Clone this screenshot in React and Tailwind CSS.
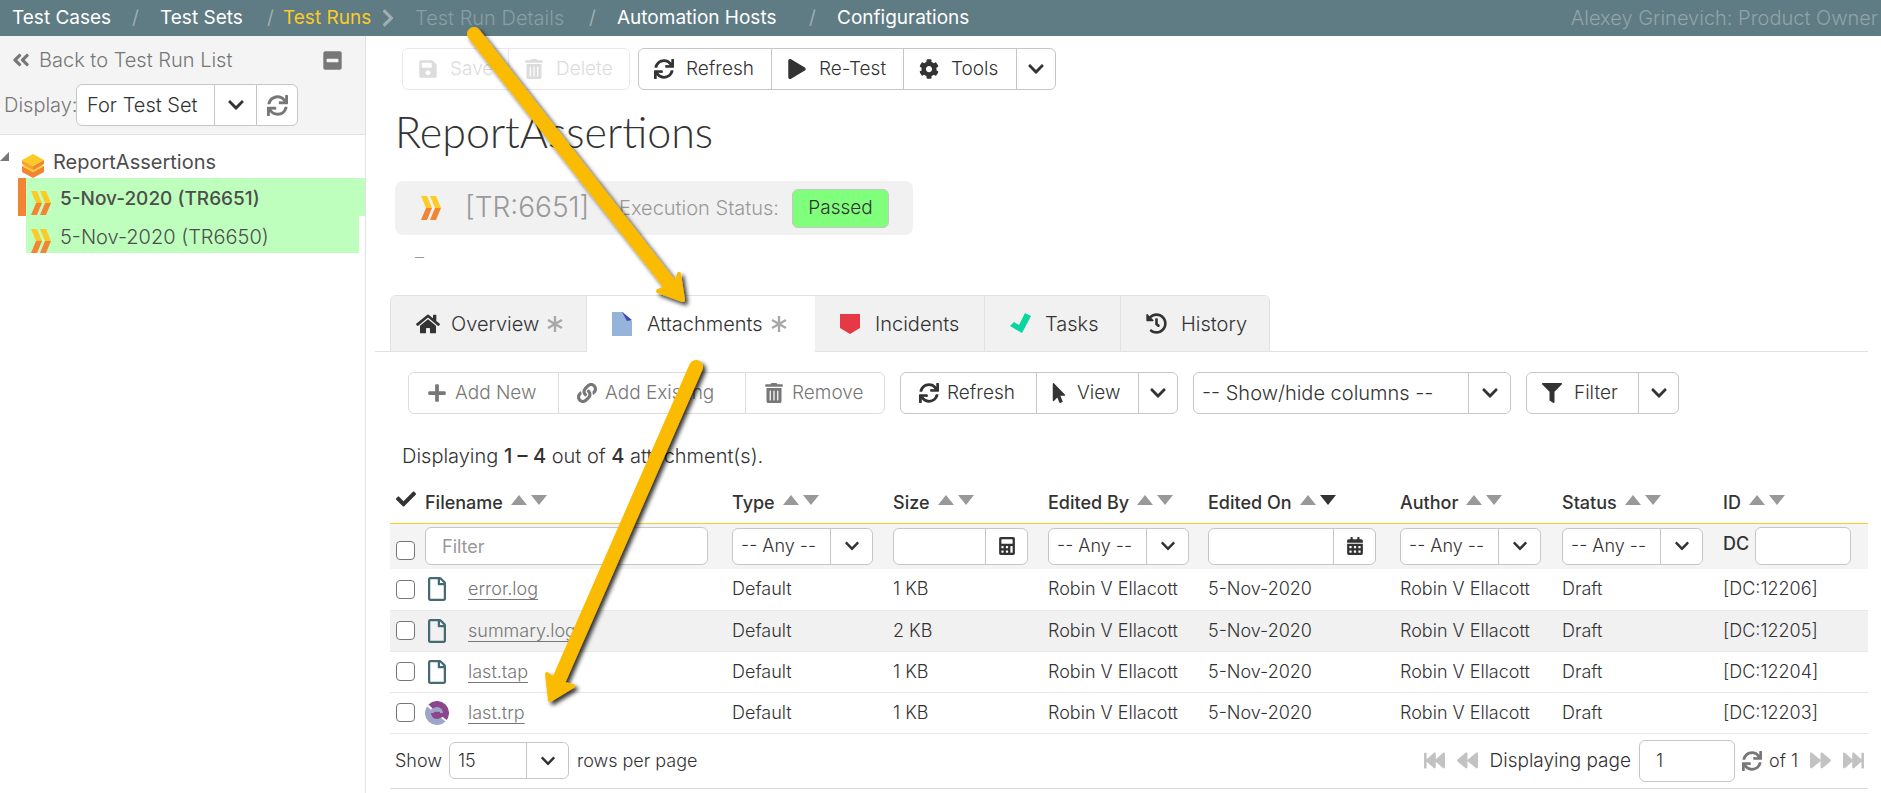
import React from "react";
import {
  FaAngleDoubleLeft, FaMinusSquare, FaSync, FaChevronDown, FaSave, FaTrashAlt, FaPlay, FaCog, FaHome,
  FaHistory, FaPlus, FaLink, FaMousePointer, FaFilter, FaCheck, FaCalculator, FaCalendarAlt,
  FaFastBackward, FaBackward, FaForward, FaFastForward, FaRegFile, FaChevronRight,
} from "react-icons/fa";

const fontBody = "font-['Inter','Open_Sans',sans-serif]";

function RunIcon({ className }) {
  return (
    <svg viewBox="0 0 20 24" className={className} aria-hidden="true">
      <path d="M0 0h6l5 12H5zM9 0h6l5 12h-6z" fill="#fdcb26" />
      <path d="M5 12h6L6 24H0zM14 12h6l-5 12H9z" fill="#f18533" />
    </svg>
  );
}

function SetIcon() {
  return (
    <svg viewBox="0 0 22 24" className="h-6 w-[22px]" aria-hidden="true">
      <path d="M0 12l11 6 11-6v6l-11 6-11-6z" fill="#f18533" />
      <path d="M0 12l3-1 8 4 8-4 3 1-11 6z" fill="#fdcb26" />
      <path d="M0 6l11 6v4L0 10z" fill="#f9a030" />
      <path d="M22 6l-11 6v4l11-6z" fill="#f18533" />
      <path d="M11 0l11 6-11 6L0 6z" fill="#fdcb26" />
    </svg>
  );
}

function Asterisk() {
  return (
    <svg viewBox="0 0 16 16" className="h-4 w-4" aria-hidden="true" stroke="#a8a8a8" strokeWidth="2.4">
      <path d="M8 0v16M1 4l14 8M15 4L1 12" />
    </svg>
  );
}

function RapiseIcon() {
  return (
    <svg viewBox="0 0 24 24" className="h-6 w-6" aria-hidden="true">
      <path d="M3.500 3.500A12 12 0 0 1 20.500 20.500z" fill="#8b468c" />
      <path d="M3.500 3.500A12 12 0 0 0 20.500 20.500z" fill="#9ea5c8" />
      <path d="M6 12a6 6 0 0 1 12 0z" fill="#9ea5c8" />
      <path d="M6 12a6 6 0 0 0 12 0z" fill="#8b468c" />
      <path d="M1.500 3.500L6.500 8M17 16.500l5 4" stroke="#fff" strokeWidth="1.800" />
      <path d="M9 11.500h6" stroke="#8b468c" strokeWidth="1.500" />
    </svg>
  );
}

const groupTone = {
  dark: "border-[#c6c6c6] divide-[#c6c6c6] text-[#333]",
  muted: "border-[#dcdcdc] divide-[#dcdcdc] text-[#777]",
  off: "border-[#e8e8e8] divide-[#e8e8e8] text-[#dcdcdc]",
};

function Group({ tone = "dark", children }) {
  return (
    <div className={`flex h-[42px] divide-x overflow-hidden rounded-md border text-[19px] ${groupTone[tone]}`}>{children}</div>
  );
}

function Btn({ icon: Icon, children, layout, disabled }) {
  return (
    <button type="button" disabled={disabled} className={`flex items-center whitespace-nowrap ${layout}`}>
      <Icon className="size-5 shrink-0" />
      {children}
    </button>
  );
}

function Caret({ width, label }) {
  return (
    <button type="button" aria-label={label} className={`flex items-center justify-center ${width}`}>
      <FaChevronDown className="size-[18px]" />
    </button>
  );
}

function Select({ label, value, className, small }) {
  return (
    <div className={`relative ${className}`}>
      <select
        aria-label={label}
        defaultValue={value}
        className={`size-full appearance-none rounded-md border border-[#c6c6c6] bg-white pl-2 font-light text-[#333] ${small ? "text-lg" : "text-xl"}`}
      >
        <option>{value}</option>
      </select>
      <span className="pointer-events-none absolute inset-y-px right-px flex w-[42px] items-center justify-center rounded-r-md border-l border-[#c6c6c6] bg-white text-[#333]">
        <FaChevronDown className={small ? "size-4" : "size-[18px]"} />
      </span>
    </div>
  );
}

function IconField({ label, icon: Icon, className }) {
  return (
    <div className={`flex h-[37px] overflow-hidden rounded-md border border-[#c6c6c6] bg-white ${className}`}>
      <input aria-label={label} className="min-w-0 flex-1 px-2" />
      <button type="button" aria-label={`${label} picker`} className="flex w-[42px] items-center justify-center border-l border-[#c6c6c6]">
        <Icon className="size-[18px]" />
      </button>
    </div>
  );
}

function Th({ children, desc }) {
  return (
    <th className="pl-[6px] text-left font-medium whitespace-nowrap">
      <span className="flex items-center gap-2">
        {children}
        <button type="button" aria-label={`Sort ${children}`} className="flex gap-1 pb-[6px]">
          <svg viewBox="0 0 36 10" className="h-[10px] w-9" aria-hidden="true">
            <path d="M0 10L8 0l8 10z" fill="#999" />
            <path d="M20 0h16l-8 10z" fill={desc ? "#333" : "#999"} />
          </svg>
        </button>
      </span>
    </th>
  );
}

function Tab({ width, icon, children, active, star }) {
  return (
    <button
      type="button"
      role="tab"
      aria-selected={!!active}
      className={`flex h-14 items-center pl-[25px] text-xl ${active ? "border-b border-white bg-white" : "border-b border-[#e2e2e2] bg-[#f1f1f1]"} ${width}`}
    >
      <span className="flex w-[35px] items-center">{icon}</span>
      <span className="pr-2">{children}</span>
      {star && <Asterisk />}
    </button>
  );
}

const rows = [
  ["error.log", "1 KB", "12206"],
  ["summary.log", "2 KB", "12205"],
  ["last.tap", "1 KB", "12204"],
  ["last.trp", "1 KB", "12203"],
];

const check = "block size-[19px] appearance-none rounded border border-[#767676] bg-white";

export default function App() {
  return (
    <div className={`relative flex min-h-screen flex-col bg-white text-lg leading-6 font-light text-[#333] ${fontBody}`}>
      <header className="flex h-9 items-center bg-[#5f7b83] pl-3 text-[19px] whitespace-nowrap text-white">
        <nav className="flex flex-1 items-center font-normal">
          <a href="#cases" className="w-[120px]">Test Cases</a>
          <span className="w-7 text-[#9eaeb2]">/</span>
          <a href="#sets" className="w-[107px]">Test Sets</a>
          <span className="w-4 text-[#9eaeb2]">/</span>
          <a href="#runs" className="w-[98px] text-[#fdcb26]">Test Runs</a>
          <FaChevronRight className="h-5 w-[14px] text-[#9eaeb2]" />
          <span className="ml-5 w-[174px] text-xl font-light text-[#8b9ea4]">Test Run Details</span>
          <span className="w-7 text-[#9eaeb2]">/</span>
          <a href="#hosts" className="w-[192px]">Automation Hosts</a>
          <span className="w-7 text-[#9eaeb2]">/</span>
          <a href="#config">Configurations</a>
        </nav>
        <span className="pr-[3px] text-xl text-[#93a3a8]">Alexey Grinevich: Product Owner</span>
      </header>

      <div className="flex flex-1">
        <aside className="w-[366px] shrink-0 border-r border-[#e2e2e2] text-xl leading-6">
          <div className="flex flex-col gap-3 border-b border-[#e2e2e2] bg-[#f4f4f4] pt-3 pb-2 text-[#777]">
            <div className="flex items-center pr-[22px] pl-[11px]">
              <a href="#list" className="flex flex-1 items-center gap-2">
                <FaAngleDoubleLeft className="size-5" />
                Back to Test Run List
              </a>
              <button type="button" aria-label="Collapse panel"><FaMinusSquare className="size-[21px]" /></button>
            </div>
            <div className="flex h-[42px] items-center pl-1">
              <label htmlFor="display" className="w-[72px]">Display:</label>
              <div className="relative h-full w-[180px]">
                <select id="display" className="size-full appearance-none rounded-l-md border border-[#c6c6c6] bg-white pl-[10px] font-light text-[#333]">
                  <option>For Test Set</option>
                </select>
                <span className="pointer-events-none absolute inset-y-px right-0 flex w-[42px] items-center justify-center border-l border-[#c6c6c6] bg-white text-[#333]">
                  <FaChevronDown className="size-[18px]" />
                </span>
              </div>
              <button type="button" aria-label="Refresh tree" className="flex h-full w-[42px] items-center justify-center rounded-r-md border border-[#c6c6c6] bg-white">
                <FaSync className="size-[21px]" />
              </button>
            </div>
          </div>
          <div className="pt-[11px] text-[#4d4d4d]">
            <div className="flex h-8 items-center font-normal">
              <svg viewBox="0 0 9 9" className="mb-3 h-[9px] w-[9px]" aria-hidden="true"><path d="M9 0v9H0z" fill="#777" /></svg>
              <span className="mt-2 ml-[13px]"><SetIcon /></span>
              <a href="#set" className="ml-[9px]">ReportAssertions</a>
            </div>
            <a href="#6651" className="ml-[18px] flex h-[38px] items-center border-l-8 border-[#f18533] bg-[#bfffbd] pt-1 pl-[5px] text-[19px] font-medium">
              <RunIcon className="mt-2 mr-[9px] h-6 w-5" />
              5-Nov-2020 (TR6651)
            </a>
            <a href="#6650" className="mr-[6px] ml-[26px] flex h-[37px] items-center bg-[#bfffbd] pt-1 pl-[5px]">
              <RunIcon className="mt-2 mr-[9px] h-6 w-5" />
              5-Nov-2020 (TR6650)
            </a>
          </div>
        </aside>

        <main className="min-w-0 flex-1 pt-3 pr-[13px] pl-[9px]">
          <div className="flex gap-2 pl-[27px]">
            <Group tone="off">
              <Btn icon={FaSave} layout="w-[106px] gap-3 pl-[15px]" disabled>Save</Btn>
              <Btn icon={FaTrashAlt} layout="w-[120px] gap-3 pl-[15px]" disabled>Delete</Btn>
            </Group>
            <Group>
              <Btn icon={FaSync} layout="w-[133px] gap-3 pl-[15px]">Refresh</Btn>
              <Btn icon={FaPlay} layout="w-[132px] gap-3 pl-[15px]">Re-Test</Btn>
              <Btn icon={FaCog} layout="w-[113px] gap-3 pl-[15px]">Tools</Btn>
              <Caret width="w-[38px]" label="More tools" />
            </Group>
          </div>

          <h1 className="mt-3 pl-5 font-['Lato',sans-serif] text-[43px] leading-[60px] font-light">ReportAssertions</h1>

          <div className="mt-[19px] ml-5 flex h-[54px] w-[518px] items-center rounded-lg bg-[#f1f1f1] pl-[26px] text-xl text-[#999]">
            <RunIcon className="h-6 w-5" />
            <span className="ml-6 w-[154px] text-[28px]">[TR:6651]</span>
            <span className="flex-1 whitespace-nowrap">Execution Status:</span>
            <span className="mr-6 flex h-[39px] w-[97px] items-center justify-center rounded-md border border-[#c6c6c6] bg-[#80ff7c] text-[19px] text-[#333]">Passed</span>
          </div>
          <div className="mt-[10px] pl-10 text-[#999]">–</div>

          <div className="mt-[26px] flex">
            <span className="w-[15px] border-b border-[#e2e2e2]" />
            <div role="tablist" className="flex divide-x divide-[#e2e2e2] overflow-hidden rounded-t-md border border-b-0 border-[#e2e2e2]">
              <Tab width="w-[196px]" star icon={<FaHome className="size-6" />}>Overview</Tab>
              <Tab width="w-[228px]" star active icon={<svg viewBox="0 0 20 24" className="h-6 w-5" aria-hidden="true"><path d="M0 0h11l9 9v15H0z" fill="#96b3d9" /><path d="M10 0l10 8-5 1z" fill="#4643b8" /></svg>}>Attachments</Tab>
              <Tab width="w-[170px]" icon={<svg viewBox="0 0 20 20" className="size-5" aria-hidden="true"><path d="M0 0h20v14l-10 6-10-6z" fill="#e63946" /></svg>}>Incidents</Tab>
              <Tab width="w-[136px]" icon={<svg viewBox="0 0 21 21" className="size-[21px]" aria-hidden="true"><path d="M0 13l4-4 5 3L15 0l6 3-9 17z" fill="#06d6a0" /></svg>}>Tasks</Tab>
              <Tab width="w-[148px]" icon={<FaHistory className="size-[21px]" />}>History</Tab>
            </div>
            <span className="flex-1 border-b border-[#e2e2e2]" />
          </div>

          <section className="pl-[15px]">
            <div className="mt-5 flex gap-[15px] pl-[18px]">
              <Group tone="muted">
                <Btn icon={FaPlus} layout="w-[150px] gap-2 pl-[18px]">Add New</Btn>
                <Btn icon={FaLink} layout="w-[187px] gap-2 pl-[18px]">Add Existing</Btn>
                <Btn icon={FaTrashAlt} layout="w-[138px] gap-2 pl-[18px]">Remove</Btn>
              </Group>
              <Group>
                <Btn icon={FaSync} layout="w-[136px] gap-2 pl-[18px]">Refresh</Btn>
                <Btn icon={FaMousePointer} layout="w-[102px] gap-2 pl-3">View</Btn>
                <Caret width="w-[38px]" label="View options" />
              </Group>
              <Select label="Columns" value="-- Show/hide columns --" className="h-[42px] w-[318px]" />
              <Group>
                <Btn icon={FaFilter} layout="w-[112px] gap-3 pl-[15px]">Filter</Btn>
                <Caret width="w-[39px]" label="Filter options" />
              </Group>
            </div>

            <p className="mt-[30px] mb-[15px] pl-3 text-xl leading-6">
              Displaying <b className="font-medium">1 – 4</b> out of <b className="font-medium">4</b> attachment(s).
            </p>

            <table className="w-full table-fixed">
              <colgroup>
                <col className="w-[29px]" />
                <col />
                <col className="w-[161px]" />
                <col className="w-[155px]" />
                <col className="w-[160px]" />
                <col className="w-[192px]" />
                <col className="w-[162px]" />
                <col className="w-[161px]" />
                <col className="w-[151px]" />
              </colgroup>
              <thead>
                <tr className="h-10 border-b border-[#fdcb26]">
                  <th className="pb-2 pl-[6px]" aria-label="Selected"><FaCheck className="size-5" /></th>
                  <Th>Filename</Th>
                  <Th>Type</Th>
                  <Th>Size</Th>
                  <Th>Edited By</Th>
                  <Th desc>Edited On</Th>
                  <Th>Author</Th>
                  <Th>Status</Th>
                  <Th>ID</Th>
                </tr>
              </thead>
              <tbody className="whitespace-nowrap">
                <tr className="h-[46px] bg-[#f4f4f4] *:pl-[6px]">
                  <td className="pt-2"><input type="checkbox" aria-label="Select all" className={check} /></td>
                  <td><input aria-label="Filename filter" placeholder="Filter" className="h-[38px] w-[283px] rounded-md border border-[#c6c6c6] bg-white px-4 placeholder:font-normal placeholder:text-[#999]" /></td>
                  <td><Select small label="Type" value="-- Any --" className="h-[37px] w-[141px]" /></td>
                  <td><IconField label="Size" icon={FaCalculator} className="w-[135px]" /></td>
                  <td><Select small label="Edited by" value="-- Any --" className="h-[37px] w-[141px]" /></td>
                  <td><IconField label="Edited on" icon={FaCalendarAlt} className="w-[168px]" /></td>
                  <td><Select small label="Author" value="-- Any --" className="h-[37px] w-[141px]" /></td>
                  <td><Select small label="Status" value="-- Any --" className="h-[37px] w-[141px]" /></td>
                  <td>
                    <label className="flex items-center font-medium">
                      <span className="w-8 pb-1">DC</span>
                      <input className="h-[38px] w-24 rounded-md border border-[#c6c6c6] bg-white px-2" />
                    </label>
                  </td>
                </tr>
                {rows.map(([name, size, id], i) => (
                  <tr key={id} className={`h-[41px] border-b border-[#e8e8e8] *:pl-[6px] ${i === 1 ? "bg-[#f1f1f1]" : ""}`}>
                    <td><input type="checkbox" aria-label={`Select ${name}`} className={check} /></td>
                    <td>
                      <a href={`#${name}`} className="flex items-center text-[#777]">
                        <span className="flex w-[43px]">{name === "last.trp" ? <RapiseIcon /> : <FaRegFile className="size-6 text-[#456a75]" />}</span>
                        <span className="underline underline-offset-4">{name}</span>
                      </a>
                    </td>
                    <td>Default</td>
                    <td>{size}</td>
                    <td>Robin V Ellacott</td>
                    <td>5-Nov-2020</td>
                    <td>Robin V Ellacott</td>
                    <td>Draft</td>
                    <td>[DC:{id}]</td>
                  </tr>
                ))}
              </tbody>
            </table>

            <div className="flex h-[55px] items-center border-b border-[#dcdcdc] pr-1 pl-[5px]">
              <span className="w-[54px]">Show</span>
              <Select small label="Rows" value="15" className="h-[37px] w-[120px]" />
              <span className="flex-1 pl-2">rows per page</span>
              <div className="flex items-center text-[#c2c2c2]">
                <button type="button" aria-label="First page" className="w-[33px]"><FaFastBackward className="size-[21px]" /></button>
                <button type="button" aria-label="Previous page" className="w-[33px]"><FaBackward className="size-[21px]" /></button>
                <label className="flex items-center text-[19px] text-[#333]">
                  <span className="pr-2">Displaying page</span>
                  <input defaultValue="1" className="h-[42px] w-24 rounded-md border border-[#c6c6c6] px-4 text-lg" />
                </label>
                <button type="button" aria-label="Reload page" className="px-[7px] text-[#777]"><FaSync className="size-5" /></button>
                <span className="pr-3 text-[#333]">of 1</span>
                <button type="button" aria-label="Next page" className="w-[33px]"><FaForward className="size-[21px]" /></button>
                <button type="button" aria-label="Last page"><FaFastForward className="size-[21px]" /></button>
              </div>
            </div>
          </section>
        </main>
      </div>

      <svg viewBox="0 0 260 700" className="pointer-events-none absolute top-5 left-[460px] h-[700px] w-[260px]" aria-hidden="true">
        <defs>
          <filter id="shade" x="-20%" y="-20%" width="150%" height="150%">
            <feDropShadow dx="3" dy="3" stdDeviation="2" floodColor="#000" floodOpacity="0.8" />
          </filter>
        </defs>
        <g fill="#fbbb00" stroke="#fbbb00" strokeLinecap="round" strokeLinejoin="round">
          <g filter="url(#shade)">
            <path d="M14 14L211 266" strokeWidth="14" />
            <path d="M223 280L198 271L209 266L217 260L219 254z" strokeWidth="4" />
          </g>
          <g filter="url(#shade)">
            <path d="M236 347L98 662" strokeWidth="14" />
            <path d="M90 680L87 654L95 660L104 664L113 666z" strokeWidth="4" />
          </g>
        </g>
      </svg>
    </div>
  );
}
